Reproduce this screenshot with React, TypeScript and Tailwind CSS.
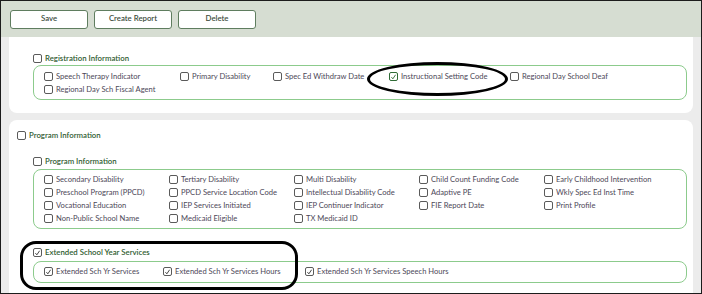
import React from "react";

// Special Ed report selection screen: action bar + grouped checkbox fieldsets.

type Item = { label: string; checked?: boolean; green?: boolean; w?: string };

function Box({ checked, green }: { checked?: boolean; green?: boolean }) {
  return (
    <span
      className={`flex h-[9px] w-[9px] shrink-0 items-center justify-center rounded-[2px] border bg-white ${
        green ? "border-[#2f6b35]" : "border-[#5a5a5a]"
      }`}
    >
      {checked && (
        <svg viewBox="0 0 10 10" className="h-[8px] w-[8px]">
          <path
            d="M2 5.2 L4.1 7.6 L8 1.8"
            fill="none"
            stroke={green ? "#2f6b35" : "#333"}
            strokeWidth="1.3"
          />
        </svg>
      )}
    </span>
  );
}

function Check({ label, checked, green, w }: Item) {
  return (
    <div className={`flex h-[13px] items-center gap-[3px] ${w ?? ""}`}>
      <Box checked={checked} green={green} />
      <span className="whitespace-nowrap text-[7.6px] text-[#4d4858]">{label}</span>
    </div>
  );
}

function Header({ label, checked }: { label: string; checked?: boolean }) {
  return (
    <div className="flex h-[13px] items-center gap-[3px]">
      <Box checked={checked} />
      <span className="whitespace-nowrap text-[7.8px] font-semibold text-[#2f5c31]">{label}</span>
    </div>
  );
}

const programItems = [
  "Secondary Disability",
  "Tertiary Disability",
  "Multi Disability",
  "Child Count Funding Code",
  "Early Childhood Intervention",
  "Preschool Program (PPCD)",
  "PPCD Service Location Code",
  "Intellectual Disability Code",
  "Adaptive PE",
  "Wkly Spec Ed Inst Time",
  "Vocational Education",
  "IEP Services Initiated",
  "IEP Continuer Indicator",
  "FIE Report Date",
  "Print Profile",
  "Non-Public School Name",
  "Medicaid Eligible",
  "TX Medicaid ID",
];

export default function App() {
  return (
    <div
      className="relative flex h-[294px] w-[702px] flex-col overflow-hidden border border-[#1c1c1c] bg-[#ececec]"
      style={{ fontFamily: "Lato, 'Open Sans', sans-serif" }}
    >
      {/* ACTION BAR */}
      <div className="flex h-[36px] shrink-0 items-center gap-[6px] bg-[#d6ddd2] pl-[9px]">
        {["Save", "Create Report", "Delete"].map((b) => (
          <button
            key={b}
            className="h-[19px] w-[78px] rounded-[3px] border border-[#5f7d5f] bg-white text-[7.8px] font-semibold text-[#3c4c3c]"
          >
            {b}
          </button>
        ))}
      </div>

      {/* BODY */}
      <div className="flex flex-1 flex-col pl-[8px] pr-[8px]">
        {/* Registration panel */}
        <div className="rounded-b-[8px] bg-white pb-[13px] pl-[24px] pr-[6px] pt-[15px]">
          <Header label="Registration Information" />
          <div className="rounded-[8px] border border-[#8ccb8c] pb-[3px] pl-[10px] pt-[4px]">
            <div className="flex">
              <Check label="Speech Therapy Indicator" w="w-[136px]" />
              <Check label="Primary Disability" w="w-[93px]" />
              <Check label="Spec Ed Withdraw Date" w="w-[116px]" />
              <Check label="Instructional Setting Code" checked green w="w-[121px]" />
              <Check label="Regional Day School Deaf" />
            </div>
            <Check label="Regional Day Sch Fiscal Agent" />
          </div>
        </div>

        {/* Program panel */}
        <div className="mt-[7px] flex-1 rounded-t-[8px] bg-white pl-[8px] pr-[6px] pt-[9px]">
          <Header label="Program Information" />
          <div className="ml-[16px] mt-[13px]">
            <Header label="Program Information" />
            <div className="mt-[1px] rounded-[8px] border border-[#8ccb8c] pb-[3px] pl-[10px] pt-[3px]">
              <div className="grid grid-cols-[repeat(5,125px)]">
                {programItems.map((l) => (
                  <Check key={l} label={l} />
                ))}
              </div>
            </div>

            <div className="mt-[17px]">
              <Header label="Extended School Year Services" checked />
            </div>
            <div className="mt-[2px] flex rounded-[8px] border border-[#8ccb8c] pb-[4px] pl-[10px] pt-[3px]">
              <Check label="Extended Sch Yr Services" checked w="w-[119px]" />
              <Check label="Extended Sch Yr Services Hours" checked w="w-[142px]" />
              <Check label="Extended Sch Yr Services Speech Hours" checked />
            </div>
          </div>
        </div>
      </div>

      {/* annotation marks */}
      <div className="absolute left-[366px] top-[61px] h-[34px] w-[141px] rounded-[50%] border-[3px] border-black" />
      <div className="absolute left-[19px] top-[240px] h-[49px] w-[278px] rounded-[16px] border-[3px] border-black" />
    </div>
  );
}
